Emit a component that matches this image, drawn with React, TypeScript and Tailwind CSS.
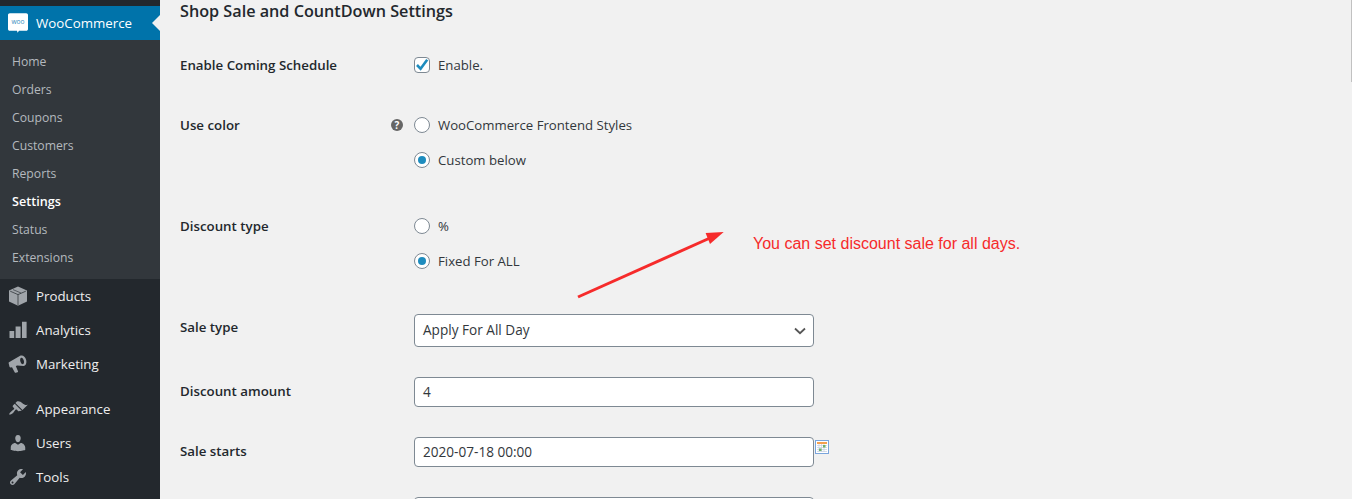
import React from "react";

const font = "[font-family:'Open_Sans','Noto_Sans',sans-serif]";

const Ico = ({ children }: { children: React.ReactNode }) => (
  <svg viewBox="0 0 20 20" className="w-5 h-5 fill-[#a0a5aa]" aria-hidden>{children}</svg>
);

const top = [
  {
    label: "Products",
    icon: (
      <>
        <path d="M10 .4 19 4.4V15.6L10 19.8 1 15.6V4.4Z" />
        <path d="M2.2 5.2 10 8.6 17.8 5.2M10 8.6V19.4" fill="none" stroke="#23282d" strokeWidth=".7" />
        <path d="M5 3.6 13 7" fill="none" stroke="#23282d" strokeWidth=".6" />
      </>
    ),
  },
  {
    label: "Analytics",
    icon: <path d="M1.5 11h4.7v7H1.5zM7.6 6.5h5v11.5h-5zM14 1.8h4.6V18H14z" />,
  },
  {
    label: "Marketing",
    icon: <path d="M12.6 1.6c2.4-.7 4.7 1.2 5.5 4.1s-.1 5.8-2.5 6.4L9.4 11.4l-1.6.5 2.2 5.4c.2.5 0 .9-.5 1l-1.7.5c-.4.1-.8 0-1-.4L4 13.2l-1.2.3c-.6.2-1.1-.2-1.3-.8L.7 9.4c-.2-.6.1-1.2.7-1.3ZM13.2 3.7c-1 .3-1.3 2-.8 3.7s1.6 3 2.6 2.7 1.3-2 .8-3.7-1.6-3-2.6-2.7Z" fillRule="evenodd" />,
  },
];

const bottom = [
  {
    label: "Appearance",
    icon: <path d="M14.48 11.06L7.41 3.99l1.5-1.5c.5-.56 2.3-.47 3.51.32 1.21.8 1.43 1.28 2.91 2.1 1.18.64 2.45 1.26 4.45.85zm-.71.71L6.7 4.7 4.93 6.47c-.39.39-.39 1.02 0 1.41l1.06 1.06c.39.39.39 1.03 0 1.42-.6.6-1.43 1.11-2.21 1.69-.35.26-.7.53-1.01.84C1.43 13.71.96 15.12 1.37 15.53s1.82-.06 3.64-1.44c.31-.31.58-.66.84-1.01.58-.78 1.09-1.61 1.69-2.21.39-.39 1.03-.39 1.42 0l1.06 1.06c.39.39 1.02.39 1.41 0z" />,
  },
  {
    label: "Users",
    icon: <path d="M10 9.25c-2.27 0-2.73-3.44-2.73-3.44C7 4.02 7.82 2 9.97 2c2.16 0 2.98 2.02 2.71 3.81 0 0-.41 3.44-2.68 3.44zm0 2.57L12.72 10c2.39 0 4.52 2.33 4.52 4.53v2.49s-3.65 1.13-7.24 1.13c-3.65 0-7.24-1.13-7.24-1.13v-2.49c0-2.25 1.94-4.48 4.47-4.48z" />,
  },
  {
    label: "Tools",
    icon: <path d="M16.68 9.77c-1.34 1.34-3.3 1.67-4.95.99l-5.41 6.52c-.99.99-2.59.99-3.58 0s-.99-2.59 0-3.57l6.52-5.42c-.68-1.65-.35-3.61.99-4.95 1.28-1.28 3.12-1.62 4.72-1.06l-2.89 2.89 2.82 2.82 2.86-2.87c.53 1.58.18 3.39-1.08 4.65zM3.81 16.21c.4.39 1.04.39 1.43 0 .4-.4.4-1.04 0-1.43-.39-.4-1.03-.4-1.43 0-.39.39-.39 1.03 0 1.43z" />,
  },
];

const subs = ["Home", "Orders", "Coupons", "Customers", "Reports", "Settings", "Status", "Extensions"];

const MenuItem = ({ label, icon }: { label: string; icon: React.ReactNode }) => (
  <div className="h-[34px] flex items-center pl-[8px] gap-[8px] text-[13.3px] text-[#eeeeee]">
    <Ico>{icon}</Ico>
    <span className="pt-[2px]">{label}</span>
  </div>
);

const Radio = ({ on, label }: { on?: boolean; label: string }) => (
  <div className="h-5 flex items-center gap-2 text-[13.2px] text-[#32373c]">
    <span className="w-4 h-4 rounded-full border border-[#7e8993] bg-white flex items-center justify-center">
      {on && <span className="w-2 h-2 rounded-full bg-[#1e8cbe]" />}
    </span>
    <span className="pt-[2px]">{label}</span>
  </div>
);

const Row = ({ label, help, className, children }: { label: string; help?: boolean; className?: string; children: React.ReactNode }) => (
  <div className={`flex ${className ?? ""}`}>
    <div className="w-[234px] shrink-0 h-5 flex items-center justify-between pr-[11px] text-[13.3px] font-semibold text-[#23282d]">
      <span className="pt-[2px]">{label}</span>
      {help && (
        <span className="w-3 h-3 rounded-full bg-[#666666] text-white text-[10px] font-bold leading-none flex items-center justify-center">?</span>
      )}
    </div>
    <div>{children}</div>
  </div>
);

const Field = ({ label, value, className, after }: { label: string; value: string; className?: string; after?: React.ReactNode }) => (
  <div className={`flex ${className ?? ""}`}>
    <div className="w-[234px] shrink-0 text-[13.3px] font-semibold text-[#23282d] leading-5 pt-[4px]">{label}</div>
    <div className="w-[400px] h-[30px] shrink-0 bg-white border border-[#7e8993] rounded-[4px] px-2 flex items-center text-[13.6px] text-[#32373c]">{value}</div>
    {after}
  </div>
);

export default function App() {
  return (
    <div className={`relative h-[499px] overflow-hidden flex bg-[#f1f1f1] ${font}`}>
      <aside className="w-40 shrink-0 bg-[#23282d] pt-[6px]">
        <div className="relative h-[34px] bg-[#0073aa] flex items-center pl-[8px] gap-[8px] text-[13.3px] text-white">
          <svg viewBox="0 0 20 20" className="w-5 h-5" aria-hidden>
            <path d="M1.8.2h16.4c1 0 1.8.8 1.8 1.8v14c0 1-.8 1.8-1.8 1.8h-7.2L9.6 19.8l-.6-2H1.8C.8 17.8 0 17 0 16V2C0 1 .8.2 1.8.2Z" fill="#fff" />
            <text x="10" y="11.2" textAnchor="middle" fontSize="6.6" fill="#3b8fc0" fontFamily="'Open Sans',sans-serif">woo</text>
          </svg>
          <span className="pt-[2px]">WooCommerce</span>
          <span className="absolute right-0 top-[9px] w-0 h-0 border-y-[8px] border-y-transparent border-r-[8px] border-r-[#f1f1f1]" />
        </div>
        <div className="bg-[#32373c] pt-[7px] pb-2">
          {subs.map((s) => (
            <div key={s} className={`h-7 pl-3 pt-[2px] flex items-center ${s === "Settings" ? "text-[12.6px] text-white font-semibold" : "text-[12.2px] text-[#b4b9be]"}`}>{s}</div>
          ))}
        </div>
        {top.map((m) => <MenuItem key={m.label} {...m} />)}
        <div className="h-[11px]" />
        {bottom.map((m) => <MenuItem key={m.label} {...m} />)}
      </aside>

      <main className="flex-1 pl-5">
        <h2 className="h-[22px] leading-[22px] text-[16.2px] font-semibold text-[#23282d]">Shop Sale and CountDown Settings</h2>

        <Row label="Enable Coming Schedule" className="mt-[33px]">
          <div className="h-5 flex items-center gap-2 text-[13.2px] text-[#32373c]">
            <span className="w-4 h-4 rounded-[4px] border border-[#7e8993] bg-white flex items-center justify-center">
              <svg viewBox="0 0 16 16" className="w-4 h-4 shrink-0" aria-hidden>
                <path d="M3 8 6.6 11.8 13.2 2.8" fill="none" stroke="#1e8cbe" strokeWidth="2.6" />
              </svg>
            </span>
            <span className="pt-[2px]">Enable.</span>
          </div>
        </Row>

        <Row label="Use color" help className="mt-10">
          <div className="flex flex-col gap-[15px]">
            <Radio label="WooCommerce Frontend Styles" />
            <Radio on label="Custom below" />
          </div>
        </Row>

        <Row label="Discount type" className="mt-[46px]">
          <div className="flex flex-col gap-[15px]">
            <Radio label="%" />
            <Radio on label="Fixed For ALL" />
          </div>
        </Row>

        <div className="flex mt-[43px]">
          <div className="w-[234px] shrink-0 text-[13.3px] font-semibold text-[#23282d] leading-5 pt-[3px]">Sale type</div>
          <div className="w-[400px] h-[33px] bg-white border border-[#7e8993] rounded-[4px] pl-2 pr-[7px] flex items-center justify-between text-[13.6px] text-[#32373c]">
            <span>Apply For All Day</span>
            <svg viewBox="0 0 12 8" className="w-3 h-2" aria-hidden>
              <path d="M1 1.5 6 6.2 11 1.5" fill="none" stroke="#555555" strokeWidth="1.8" />
            </svg>
          </div>
        </div>

        <Field label="Discount amount" value="4" className="mt-[30px]" />
        <Field
          label="Sale starts"
          value="2020-07-18 00:00"
          className="mt-[30px]"
          after={
            <svg viewBox="0 0 14 14" className="w-[14px] h-[14px] mt-[3px] ml-[1px]" aria-hidden>
              <rect x="0.5" y="0.5" width="13" height="13" fill="#ffffff" stroke="#7aa5dc" />
              <rect x="2" y="2" width="10" height="2" fill="#f5a04f" />
              <path d="M2 5.5h10M2 7.5h10M2 9.5h10M2 11.5h10M4 4v8M6.5 4v8M9 4v8" stroke="#c5cfe0" strokeWidth="0.7" />
              <rect x="4" y="8.5" width="2.5" height="2.5" fill="#6fb26a" />
              <rect x="8" y="5" width="2.5" height="2.5" fill="#6fb26a" />
            </svg>
          }
        />
        <Field label="" value="" className="mt-[30px]" />
      </main>

      <svg viewBox="0 0 160 80" className="absolute left-[570px] top-[225px] w-40 h-20" aria-hidden>
        <path d="M8 72 140 13" stroke="#f62b2b" strokeWidth="3" />
        <path d="M153.7 7 135.6 8 140 19Z" fill="#f62b2b" />
      </svg>
      <p className="absolute left-[753px] top-[235px] text-[16px] leading-[18px] text-[#f62b2b] [font-family:'Liberation_Sans',sans-serif]">You can set discount sale for all days.</p>
      <div className="absolute right-0 top-0 w-[1px] h-[82px] bg-[#c1c1c1]" />
    </div>
  );
}
